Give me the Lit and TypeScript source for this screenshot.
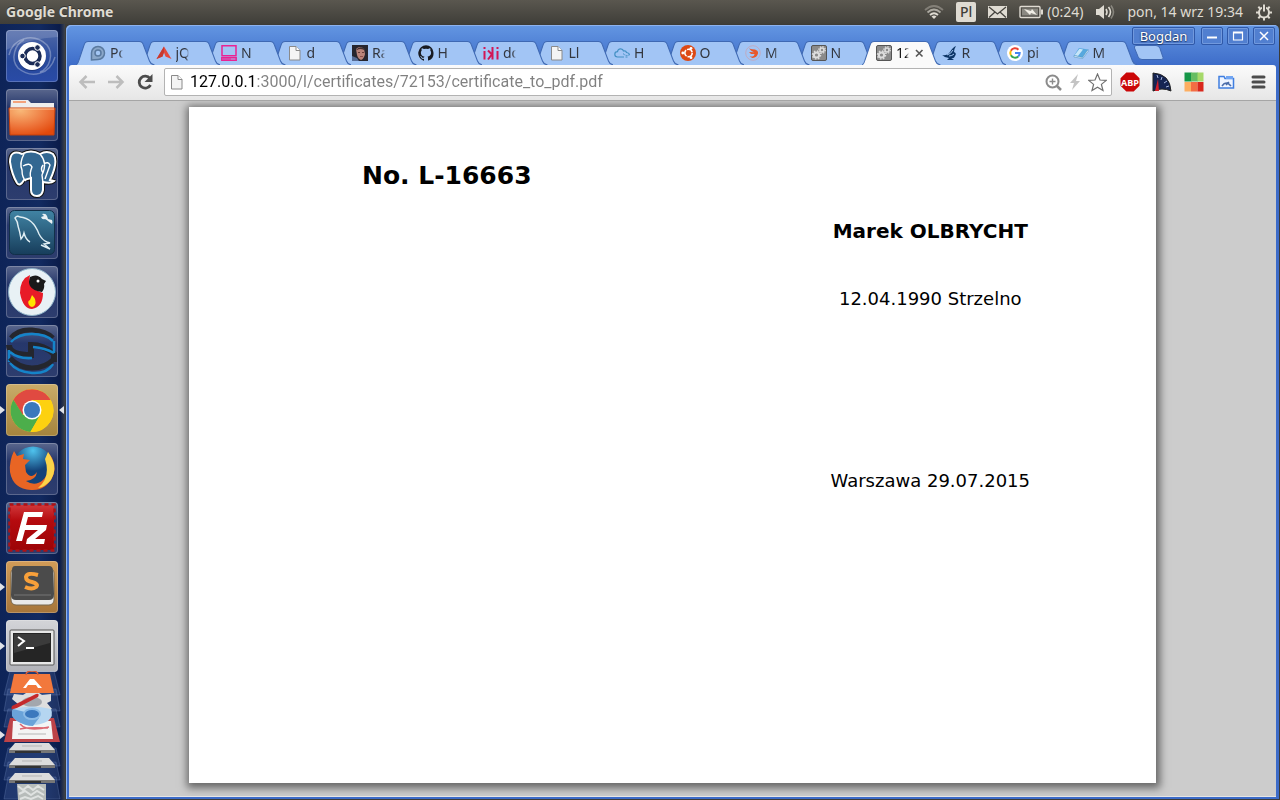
import { LitElement, html, css, svg, TemplateResult, SVGTemplateResult } from "lit";
import { customElement, property, state } from "lit/decorators.js";
import { classMap } from "lit/directives/class-map.js";

const icon = (w: number, h: number, body: SVGTemplateResult) =>
  html`<svg width=${w} height=${h} viewBox="0 0 ${w} ${h}" aria-hidden="true">${body}</svg>`;

const page = svg`<path d="M2.5 1.500h6.500l4 4v9.500h-10.500z" fill="#f4f4f4" stroke="#8a8a8a"/><path d="M9 1.500v4h4" fill="#fff" stroke="#8a8a8a"/>`;
const gears = svg`<rect x=".5" y=".5" width="15" height="15" rx="1.500" fill="#8b8b8b" stroke="#555"/>
  <circle cx="5.500" cy="10" r="2.600" fill="none" stroke="#ddd" stroke-width="2"/><circle cx="5.500" cy="10" r="4" fill="none" stroke="#ddd" stroke-width="1.500" stroke-dasharray="1.500 1.640"/>
  <circle cx="11" cy="5" r="2" fill="none" stroke="#ddd" stroke-width="1.600"/><circle cx="11" cy="5" r="3.300" fill="none" stroke="#ddd" stroke-width="1.200" stroke-dasharray="1.300 1.290"/>`;

interface Tab { title: string; icon: SVGTemplateResult; }

const tabs: Tab[] = [
  { title: "Po", icon: svg`<path d="M1.500 15V8a6.500 6.500 0 1 1 6.500 6.500z" fill="#8aa7c9" stroke="#59799f" stroke-width="1.500"/><circle cx="8" cy="8" r="3" fill="#a3c6f3" stroke="#59799f" stroke-width="1.500"/>` },
  { title: "jQ", icon: svg`<path d="M8 1.500L15.500 14 9.500 11.500 8 7.500 6.500 11.500.5 14z" fill="#e2483d"/><path d="M8 1.500L.5 14l6-2.500L8 7z" fill="#c7392f"/>` },
  { title: "N", icon: svg`<path d="M1 .8h14v10H1zM.8 12.700h14.400v2.500H.8z" fill="none" stroke="#ea2393" stroke-width="1.500"/><path d="M2 14h8" stroke="#ea2393"/>` },
  { title: "d", icon: page },
  { title: "Ra", icon: svg`<path d="M0 0h16v16H0z" fill="#26252e"/><path d="M4 4q4-4 8 0l1 5q-1 5-4 6-3-1-4-5z" fill="#b98379"/><path d="M4 5q4-5 9-1l-1 1q-4-2-7 0z" fill="#413030"/><path d="M0 11l5 2 2 3H0z" fill="#566c96"/><path d="M6 7.500h2m2 0h2" stroke="#6b3f3a"/><path d="M8 11.500h3" stroke="#8c4f4a"/>` },
  { title: "H", icon: svg`<path fill="#181b22" d="M8 .2a8 8 0 0 0-2.500 15.500c.4.100.5-.2.500-.4v-1.500c-2.200.500-2.700-1-2.700-1-.4-.9-.9-1.200-.9-1.200-.7-.5.100-.5.100-.5.800.100 1.200.8 1.200.8.700 1.300 1.900.9 2.300.7.100-.5.300-.9.500-1.100-1.800-.2-3.600-.9-3.600-4 0-.9.300-1.600.8-2.100-.1-.2-.4-1 .1-2.100 0 0 .7-.2 2.200.8a7.600 7.600 0 0 1 4 0c1.500-1 2.200-.8 2.200-.8.400 1.100.2 1.900.1 2.100.5.600.8 1.300.8 2.100 0 3.100-1.900 3.800-3.600 4 .3.200.5.700.5 1.500v2.200c0 .2.100.5.500.4A8 8 0 0 0 8 .2z"/>` },
  { title: "do", icon: svg`<path d="M1.500 6V14.500M9.500 2v12.500M9.500 10L5 5.500M9.500 8.500L5 14.500M14.500 6V14.500" fill="none" stroke="#d11755" stroke-width="2"/><path d="M.5 3h2m11 0h2" stroke="#d11755" stroke-width="2"/>` },
  { title: "Ll", icon: page },
  { title: "H", icon: svg`<path d="M10 12H3.500a2.700 2.700 0 0 1 0-5.400C4 3 8.800 3 9.500 6q2.500-.5 3 1.500 3 .5 2.800 2.500" fill="none" stroke="#4390c4" stroke-width="1.200"/><path d="M9 8.500q3 3 6.500 1.500m-4 2h3" fill="none" stroke="#4390c4" stroke-dasharray="2 1"/>` },
  { title: "O", icon: svg`<circle cx="8" cy="8" r="8" fill="#dd4814"/><circle cx="8.500" cy="8" r="3.700" fill="none" stroke="#fff" stroke-width="1.600" stroke-dasharray="6.700 1"/><g fill="#fff"><circle cx="2.800" cy="8" r="1.400"/><circle cx="11" cy="3.300" r="1.400"/><circle cx="11" cy="12.700" r="1.400"/></g>` },
  { title: "M", icon: svg`<circle cx="8" cy="8" r="7.300" fill="none" stroke="#c7a5b5" stroke-width=".8"/><path d="M4 3.500q3 1 6 1 3.500 1 3 4-1 4-5.500 4.500l-3-1.500q5 .5 5-2.500H6l-2-2 5 .2Q6 6 4 3.500z" fill="#e8582b"/>` },
  { title: "N", icon: gears },
  { title: "12", icon: gears },
  { title: "R", icon: svg`<path d="M0 10q5 1 8-3 3-5 6-6-2 3-2 6 3 1 1 4-1 3-4 2l3 2H5l2-2q-4 0-7-3z" fill="#0d3566"/><path d="M5 10q4-1 6-5m-4 6q3 0 5-2" stroke="#a3c6f3" fill="none"/>` },
  { title: "pi", icon: svg`<circle cx="8" cy="8" r="8" fill="#fff"/><g fill="none" stroke-width="2"><path d="M11.400 4.700A4.700 4.700 0 0 0 3.900 5.700" stroke="#ea4335"/><path d="M3.900 5.700a4.700 4.700 0 0 0 0 4.600" stroke="#fbbc05"/><path d="M3.900 10.300a4.700 4.700 0 0 0 7.300 1.100" stroke="#34a853"/><path d="M11.200 11.400A4.700 4.700 0 0 0 12.700 8H8" stroke="#4285f4"/></g>` },
  { title: "M", icon: svg`<path d="M6 3l9 1.500-5.500 8L1 10.500z" fill="#57a8de"/><path d="M6.500 3.800l3.500.7-5 6.500-3.500-.8z" fill="#c7e5f8"/><path d="M1 10.500l8.500 2 5.500-8v2l-5.300 7L1 12z" fill="#eff8fd" stroke="#3b84b9" stroke-width=".5"/>` },
];

interface App { name: string; tone: string; running?: boolean; focused?: boolean; art: SVGTemplateResult; }

const apps: App[] = [
  { name: "Dash", tone: "dash", art: svg`<g fill="none" stroke="#fff" stroke-opacity=".3" stroke-width="1.500"><path d="M3 25C7 8 27 2 41 15c7 9 3 23-7 27"/><path d="M49 27C44 45 25 49 12 38 4 29 9 14 18 10"/></g><path d="M0 20Q24 8 52 7V0H0z" fill="#fff" opacity=".15"/>
    <circle cx="26" cy="27" r="14" fill="#0b1c49" opacity=".4"/><circle cx="26" cy="26" r="14" fill="#fff"/><circle cx="26.500" cy="26" r="7.500" fill="none" stroke="#1b2c57" stroke-width="3.500"/><g fill="#1b2c57" stroke="#fff"><circle cx="16.500" cy="26" r="2.800"/><circle cx="31.500" cy="17.500" r="2.800"/><circle cx="31.500" cy="34.500" r="2.800"/></g>` },
  { name: "Files", tone: "plain", art: svg`<defs><radialGradient id="fo" cx=".25" cy=".1" r="1"><stop stop-color="#f8b777"/><stop offset=".6" stop-color="#ed7339"/><stop offset="1" stop-color="#e2480b"/></radialGradient></defs><path d="M5 11h17l3 3h23v10H4z" fill="#eee"/><path d="M7 12h13v2H7z" fill="#f3a27b"/><path d="M3 19h46l-1 27H4z" fill="url(#fo)" stroke="#c6400c"/><path d="M4 20h44" stroke="#ffc69d"/>` },
  { name: "pgAdmin", tone: "plain", art: svg`<path d="M16 6Q4 1 4 14q2 13 7 21 3 4 7-3l7-2v12q0 6 6 6 5 0 6-6V34q8 2 11-1l-4-1Q53 13 47 6q-6-4-13 0-9-5-18 0z" fill="#336791" stroke="#111" stroke-width="4" stroke-linejoin="round"/><path d="M16 6Q4 1 4 14q2 13 7 21 3 4 7-3l7-2v12q0 6 6 6 5 0 6-6V34q8 2 11-1l-4-1Q53 13 47 6q-6-4-13 0-9-5-18 0z" fill="#336791" stroke="#fff" stroke-width="2"/><path d="M18 6q-5 9-2 16 0 8 4 11m-3-15q7-4 9 1-3 7-1 11M34 6q8 9 2 21l1 8m0-18q-3 4 0 8m1-9q4-3 6 1l-5 14" fill="none" stroke="#fff" stroke-width="1.400"/>` },
  { name: "MySQL Workbench", tone: "plain", art: svg`<defs><linearGradient id="my" x2="0" y2="1"><stop stop-color="#4184a4"/><stop offset="1" stop-color="#173d5b"/></linearGradient></defs><rect x="3.500" y="3.500" width="45" height="44" rx="5" fill="url(#my)" stroke="#123049"/><path d="M24 35q-4-2-6-9-1 4-3 6-1-7-3-13 0-4-3-8 2-3 5-1 13 1 19 17 3 6 8 8l3 1-6 1 6 5-9-4" fill="none" stroke="#deedf3" stroke-width="1.400"/><path d="M36 7q4-1 5 2l1 3 4 1q1 2 0 4l-4-3q-1-1-3-2-3 1-4-2l3-1z" fill="#eaf1f4"/>` },
  { name: "Charm", tone: "plain", art: svg`<circle cx="26" cy="26" r="23.500" fill="#e8f1f5" stroke="#8fb3c8"/><path d="M24 9q-10 4-10 18 3 16 12 16 11-2 11-16-4-1-10-5-5-5-3-13z" fill="#e81b27"/><path d="M24 11q7-4 12 2l4 2-2 3q1 4-2 8-9-1-12-6-2-4 0-9z" fill="#1a1a1a"/><circle cx="32" cy="15" r="1.500" fill="#fff"/><path d="M26 29q5 5 3 10-3 4-6 0-2-4 1-5z" fill="#ffe400"/>` },
  { name: "SmartSVN", tone: "plain", art: svg`<path d="M5 13Q12 4 26 5t21 8" fill="none" stroke="#25272e" stroke-width="5"/><path d="M5 17Q12 9 26 9t21 7" fill="none" stroke="#1584c9" stroke-width="2.500"/><path d="M3 20q0 10 22 10V20q13 0 23 9v8" fill="none" stroke="#24262e" stroke-width="6"/><path d="M4 27q8 7 22 6M27 22q12 1 21 6M3 25v12m45-21v12M4 38q7 9 22 10t21-9" fill="none" stroke="#1584c9" stroke-width="2.500"/><path d="M4 33q9 10 22 10t22-9" fill="none" stroke="#24262e" stroke-width="5"/>` },
  { name: "Google Chrome", tone: "gold", running: true, focused: true, art: svg`<circle cx="26" cy="26.500" r="21.500" fill="#ffd21c"/><path d="M7.400 15.700A21.500 21.500 0 0 1 44.600 16H26L16.500 31z" fill="#e04a41"/><path d="M7.400 15.700a21.500 21.500 0 0 0 17 32.200L34 31H17z" fill="#4cae4b"/><path d="M26 16h18.600a21.500 21.500 0 0 1-20.200 32L34 32z" fill="#fdd110"/><circle cx="26" cy="26" r="9.500" fill="#fff"/><circle cx="26" cy="26" r="8" fill="#3b78bd"/>` },
  { name: "Firefox", tone: "plain", art: svg`<defs><radialGradient id="ff" cx=".5" cy=".1"><stop stop-color="#4fc3ee"/><stop offset="1" stop-color="#144278"/></radialGradient></defs><circle cx="27" cy="24" r="20.500" fill="url(#ff)"/><path d="M42 9q10 12 5 24-7 15-22 14Q7 46 4 29q-1-11 4-21l3 5 7-2-1 5 7 1-5 5 1 7q5 8 11 0-1 8-11 9 9 6 17-1 9-9 5-28z" fill="#e96524"/><path d="M42 9q11 15 3 28-6 7-13 8 13-11 7-29z" fill="#fad449"/>` },
  { name: "FileZilla", tone: "plain", art: svg`<defs><linearGradient id="fz" x2="0" y2="1"><stop stop-color="#d0373a"/><stop offset=".35" stop-color="#b50a0e"/><stop offset="1" stop-color="#9c0407"/></linearGradient></defs><rect x="4" y="3" width="44" height="45" fill="url(#fz)"/><rect x="3.500" y="2.500" width="45" height="46" fill="none" stroke="#ad1216" stroke-width="2.500" stroke-dasharray="4 3"/><path d="M18 10h19l-1 5H22l-2 8h11l-1 5H19l-3 11h-6z" fill="#fff"/><path d="M23 23h18l-1 5-11 9h10l-1 5H20l1-5 11-9H22z" fill="#fff"/>` },
  { name: "Sublime Text", tone: "amber", running: true, art: svg`<rect x="5" y="7" width="43" height="37" rx="5" fill="#e9e9e9" stroke="#776850"/><path d="M9 5h34q4 0 4 5l1 23q0 6-5 6H10q-5 0-5-5L6 9q0-4 3-4z" fill="#4b4b4b"/><path d="M8 34h37" stroke="#777"/><path d="M32 14q-11-3-12 2 0 4 6 5 7 2 4 5-4 3-11 0" fill="none" stroke="#f8a03a" stroke-width="4"/>` },
  { name: "Terminal", tone: "silver", running: true, art: svg`<rect x="4" y="10" width="44" height="35" rx="1" fill="#e8e8e8" stroke="#555"/><rect x="7" y="13" width="38" height="29" fill="#252525"/><path d="M8 14h36v9L8 33z" fill="#fff" opacity=".1"/><path d="M12 17l6 4-6 5M20 28h8" fill="none" stroke="#fff" stroke-width="2"/>` },
];

const foldedStack = svg`
  <g fill="#6786c4" fill-opacity=".2" stroke="#8ba4d5" stroke-opacity=".25"><path d="M10 0h44l6 24H4z"/><path d="M8 18h48l4 22H4z"/><path d="M8 38h48l4 18H4z"/><path d="M8 77h48l4 18H4z"/><path d="M8 91h48l4 18H4z"/><path d="M8 106h48l4 22H4z"/></g>
  <path d="M14 3h36l4 19H10z" fill="#f2783c"/><path d="M26 4q0-4 6-4t6 4" fill="none" stroke="#db5d33" stroke-width="1.500"/><path d="M23 17l7-9h4l8 9h-4l-2-3h-8l-2 3z" fill="#fff"/>
  <path d="M14 23l9 1 3-2h13l3 2 9-1v7l-4 2 5 6-13 3H17l-4-4 5-4-6-5z" fill="#dedede"/><ellipse cx="32" cy="31" rx="10" ry="5" fill="#a3a7ad"/><path d="M12 35l24-12q4-1 2 3L15 38q-5 1-3-3z" fill="#c52a2c"/>
  <path d="M10 47h44l6 24H4z" fill="#bd4348"/><path d="M13 50h38l2 18H12z" fill="#f4f4f4"/><path d="M20 53q7 8 29 3M20 58q8-2 28-1" fill="none" stroke="#dc6771" stroke-width="1.500"/><path d="M18 63h28" stroke="#d5d5d5" stroke-width="2"/>
  <path d="M13 38q19-5 38 0 3 7-3 12-15 8-31 0-7-6-4-12z" fill="#b5d6f1"/><path d="M13 38q-4 7 4 12 8 5 16 5l6-8-10-5z" fill="#6aa3d9"/><ellipse cx="32" cy="43" rx="8" ry="5" fill="#3b78bd" stroke="#8cbbe6" stroke-width="2"/>
  ${[0, 15, 30].map((y) => svg`<g transform="translate(0 ${y})"><path d="M15 72h34l6 7H9z" fill="#dcdcdc"/><path d="M9 79h46v3H9z" fill="#777"/><path d="M15 80h26v2H15z" fill="#333"/><path d="M22 75h20" stroke="#b5b5b5"/></g>`)}
  <path d="M17 113h29v16H18z" fill="#b7bcba"/><path d="M18 115l5 4 5-4 5 4 5-4 6 4M19 123l6-3 6 4 6-4 7 4M20 128l5-2 6 2 7-3 5 3" fill="none" stroke="#dfe2e1" stroke-width="2"/>`;

@customElement("launcher-bar")
class LauncherBar extends LitElement {
  static styles = css`
    :host { display: block; overflow: hidden; background: linear-gradient(90deg, #0e2458 0%, #122a61 60%, #0b1c4a 92%, #3c424b 100%); }
    .list { list-style: none; margin: 0; padding: 6px 0 0; display: flex; flex-direction: column; gap: 7px; }
    .item { display: grid; grid-template-columns: 6px 52px 6px; align-items: center; flex: none; }
    .tile { appearance: none; display: block; width: 52px; height: 52px; padding: 0; border: 0; border-radius: 4px; overflow: hidden; grid-column: 2; grid-row: 1; box-shadow: inset 0 0 0 1px rgba(255, 255, 255, 0.22); }
    .tile svg { display: block; }
    .dash { background: linear-gradient(#5069a8, #27499b 60%, #2a4ba7); }
    .plain { background: linear-gradient(#5a678d, #26376b 35%, #2d3d6e); }
    .gold { background: linear-gradient(#c9ab69, #a5843d); }
    .amber { background: linear-gradient(#d29c58, #a6753a); }
    .silver { background: linear-gradient(#d3d4d8, #b1b2b8); }
    .mark { width: 0; height: 0; border: 4px solid transparent; grid-row: 1; }
    .running { border-left: 5px solid #dfe2e8; border-right: 0; grid-column: 1; }
    .focused { border-right: 5px solid #dfe2e8; border-left: 0; grid-column: 3; justify-self: end; }
    .stack { display: block; width: 65px; height: 129px; }
    .item.folded { display: block; margin-top: -8px; }
  `;
  render() {
    return html`<ul class="list">
      ${apps.map((a) => html`<li class="item">
        ${a.running ? html`<span class="mark running"></span>` : ""}
        <button class="tile ${a.tone}" aria-label=${a.name}>${icon(52, 52, a.art)}</button>
        ${a.focused ? html`<span class="mark focused"></span>` : ""}
      </li>`)}
      <li class="item folded"><svg class="stack" viewBox="0 0 65 129" aria-hidden="true"><path d="M0 60l5 4-5 4z" fill="#dfe2e8"/>${foldedStack}</svg></li>
    </ul>`;
  }
}

@customElement("system-panel")
class SystemPanel extends LitElement {
  static styles = css`
    :host { display: flex; justify-content: space-between; align-items: center; padding: 0 7px 0 6px; background: linear-gradient(#5a574f, #3f3e39); color: #dfdbd2; font: 14px/24px "Noto Sans", sans-serif; }
    .title { font-weight: 700; text-shadow: 0 -1px #33322e; }
    .status { display: flex; align-items: center; gap: 12px; }
    .status svg { display: block; }
    .lang { width: 20px; height: 20px; border-radius: 2px; background: #dfdbd2; color: #3f3e39; line-height: 20px; font-weight: 500; text-align: center; }
    .power { display: flex; align-items: center; gap: 4px; }
  `;
  render() {
    return html`<span class="title">Google Chrome</span>
      <div class="status">
        ${icon(20, 16, svg`<g fill="none" stroke="#dfdbd2" stroke-width="1.800"><path d="M1 6q9-8 18 0" opacity=".35"/><path d="M3.500 8.500q6.500-6 13 0" opacity=".65"/><path d="M6 11q4-3.600 8 0"/></g><path d="M7.500 12.500q2.500-2 5 0L10 15z" fill="#dfdbd2"/>`)}
        <span class="lang">Pl</span>
        ${icon(19, 14, svg`<path d="M0 1h19v12H0z" fill="#dfdbd2"/><path d="M1 2l8.500 7L18 2M1 12.500l6-5.500m11 5.500L12 7" fill="none" stroke="#45433e" stroke-width="1.300"/>`)}
        <span class="power">${icon(24, 14, svg`<rect x="1" y="1.500" width="20" height="11" rx="1" fill="none" stroke="#dfdbd2" stroke-width="1.400"/><path d="M22 4.500h2v5h-2z" fill="#dfdbd2"/><path d="M3 3.500h16v7H3z" fill="#8b8982"/><path d="M5 4l7 2 1-2 5 6-6-2-1 2z" fill="#f0ede5"/>`)}<span>(0:24)</span></span>
        ${icon(20, 16, svg`<path d="M1 5h3l5-4v14l-5-4H1z" fill="#dfdbd2"/><path d="M11 5q2 3 0 6M13.500 3q4 5 0 10" fill="none" stroke="#dfdbd2" stroke-width="1.600"/><path d="M16 1.500q5 6.500 0 13" fill="none" stroke="#dfdbd2" stroke-opacity=".4" stroke-width="1.600"/>`)}
        <span>pon, 14 wrz 19:34</span>
        ${icon(18, 18, svg`<circle cx="9" cy="9.500" r="5" fill="none" stroke="#dfdbd2" stroke-width="2"/><path d="M7 2h4v7H7z" fill="#4d4a44"/><path d="M9 1.500v7M1 9.500h3m10 0h3M3.300 15.200l2-2m7.400 0l2 2M9 14.500v3M3.300 3.800l2 2m7.400 0l2-2" stroke="#dfdbd2" stroke-width="2"/>`)}
      </div>`;
  }
}

@customElement("tab-strip")
class TabStrip extends LitElement {
  @property({ type: Number }) active = 12;
  static styles = css`
    :host { display: flex; align-items: flex-start; padding: 0 112px 0 7px; margin-top: -4px; height: 24px; }
    .tabs { display: flex; flex: 1; min-width: 0; height: 24px; }
    .tab { position: relative; flex: 1 1 0; min-width: 0; display: flex; align-items: center; }
    .shape { position: absolute; left: 0; top: 0; width: calc(100% + 13px); height: 24px; }
    .shape path { fill: #a2c5f5; stroke: #3f69b3; }
    .active .shape path { fill: #fafafa; stroke: #416bb4; }
    .pick { position: relative; appearance: none; border: 0; background: none; margin: 0; padding: 0 0 0 14px; display: flex; align-items: center; gap: 4px; height: 24px; color: #33373f; font: 14px/24px "Noto Sans", sans-serif; }
    .active .pick { color: #111; }
    .pick svg { display: block; flex: none; }
    .name { width: 13px; overflow: hidden; white-space: nowrap; text-align: left; mask-image: linear-gradient(90deg, #000 75%, transparent); }
    .close { position: relative; appearance: none; border: 0; background: none; padding: 0; margin-left: 5px; height: 10px; width: 10px; }
    .close svg { display: block; }
    .fresh { appearance: none; border: 0; background: none; padding: 0; margin: 4px 0 0 9px; height: 16px; width: 31px; flex: none; }
    .fresh svg { display: block; }
  `;
  render() {
    return html`<div class="tabs" role="tablist">
      ${tabs.map((t, i) => html`<div class=${classMap({ tab: true, active: i === this.active })} style="z-index:${i === this.active ? 30 : 20 - i}">
        <svg class="shape" viewBox="0 0 78 24" preserveAspectRatio="none" aria-hidden="true"><path d="M0 24Q2 23 3 19L8 4Q9 .5 12 .5H63Q66 .5 67 4L73 20Q74 23 78 24"/></svg>
        <button class="pick" role="tab" aria-selected=${i === this.active}>${icon(16, 16, t.icon)}<span class="name">${t.title}</span></button>
        ${i === this.active ? html`<button class="close" aria-label="Close tab">${icon(10, 10, svg`<path d="M2 2l6.500 6.500m0-6.500l-6.500 6.500" stroke="#555" stroke-width="1.600"/>`)}</button>` : ""}
      </div>`)}
      </div>
      <button class="fresh" aria-label="New tab">${icon(31, 16, svg`<path d="M3 .5h20q3 0 4 3l3 9q1 2-2 2H9q-3 0-4-3L1.500 3Q1 .5 3 .5z" fill="#a2c5f5" stroke="#3f69b3"/>`)}</button>`;
  }
}

@customElement("browser-toolbar")
class BrowserToolbar extends LitElement {
  @state() private url = "127.0.0.1:3000/l/certificates/72153/certificate_to_pdf.pdf";
  static styles = css`
    :host { display: flex; align-items: center; height: 36px; box-sizing: border-box; padding: 0 8px 1px 9px; gap: 10px; background: linear-gradient(#fbfbfb, #e6e6e6); border-bottom: 1px solid #a5a5a5; border-radius: 3px 3px 0 0; }
    .nav { display: flex; gap: 11px; }
    .act { appearance: none; border: 0; background: none; padding: 0; display: block; flex: none; }
    .act svg { display: block; }
    .omni { flex: 1; min-width: 0; display: flex; align-items: center; height: 28px; box-sizing: border-box; border: 1px solid #b3b3b3; border-radius: 2px; background: #fff; padding: 0 4px; gap: 5px; }
    .url { flex: 1; min-width: 0; border: 0; padding: 0; margin: 0; height: 26px; font: 16px/26px Roboto, sans-serif; color: #808080; -webkit-text-fill-color: transparent; background: linear-gradient(90deg, #000 66px, #808080 66px); background-clip: text; -webkit-background-clip: text; outline: none; }
    .extras { display: flex; gap: 12px; margin-left: -2px; }
  `;
  render() {
    const act = (label: string, w: number, h: number, body: SVGTemplateResult): TemplateResult =>
      html`<button class="act" aria-label=${label}>${icon(w, h, body)}</button>`;
    return html`<div class="nav">
        ${act("Back", 18, 18, svg`<path d="M17 9H2.500M8.500 3L2.500 9l6 6" fill="none" stroke="#bdbdbd" stroke-width="2.500"/>`)}
        ${act("Forward", 18, 18, svg`<path d="M1 9h14.500M9.500 3l6 6-6 6" fill="none" stroke="#bdbdbd" stroke-width="2.500"/>`)}
        ${act("Reload", 18, 18, svg`<path d="M14.500 12A6 6 0 1 1 14 5.500" fill="none" stroke="#4c4c4c" stroke-width="2.800"/><path d="M16.500 1v8h-8z" fill="#4c4c4c"/>`)}
      </div>
      <div class="omni">
        ${icon(16, 16, page)}
        <input class="url" type="text" aria-label="Address" spellcheck="false" .value=${this.url} />
        ${act("Zoom", 17, 17, svg`<circle cx="7.500" cy="7.500" r="6" fill="none" stroke="#8b8b8b" stroke-width="2"/><path d="M12 12l4 4" stroke="#8b8b8b" stroke-width="2.500"/><path d="M7.500 4.500v6m-3-3h6" stroke="#8b8b8b" stroke-width="1.400"/>`)}
        ${act("Plugins", 16, 16, svg`<path d="M11 0L3 9h4l-2 7 8-9H9z" fill="#c4c4c4"/>`)}
        ${act("Bookmark", 19, 19, svg`<path d="M9.500 1l2.500 6 6.300.4-4.900 4 1.600 6.100-5.500-3.300L4 17.500l1.600-6.100-4.900-4L7 7z" fill="#fff" stroke="#707070" stroke-width="1.200"/>`)}
      </div>
      <div class="extras">
        ${act("Adblock Plus", 20, 20, svg`<path d="M6.300.5h7.400l5.800 5.800v7.400l-5.800 5.800H6.300L.5 13.700V6.300z" fill="#cb0708"/><text x="10" y="13.500" text-anchor="middle" font-family="Open Sans" font-weight="700" font-size="9" fill="#fff">ABP</text>`)}
        ${act("Page speed", 20, 20, svg`<path d="M1 1q17 1 18 18-9-4-18 0z" fill="#152453" stroke="#242424"/><path d="M5 3l1 3m4-1l-1 3m6 1l-3 2m5 3l-3 1" stroke="#a9b9df"/><path d="M3 19L6 7l1 12z" fill="#d31e2a"/>`)}
        ${act("Colour grid", 20, 20, svg`<path d="M.5.500h7v9h-7z" fill="#159647"/><path d="M7 .5h7v9H7z" fill="#66bd63"/><path d="M13.500.500h6v9h-6z" fill="#a6d96a"/><path d="M.5 10h6.500v9.500H.5z" fill="#fdae61"/><path d="M7 10h6.500v9.500H7z" fill="#f46d43"/><path d="M13.500 10h6v9.500h-6z" fill="#d9281d"/>`)}
        ${act("Page monitor", 20, 20, svg`<path d="M3 4.500h5l1 2h8.500v9.500H3z" fill="#eef4ff" stroke="#3f7ee0" stroke-width="1.500"/><path d="M10 4h7v3h-7z" fill="#70a5f3"/><path d="M6 14q4-6 9 0m-5-1l3-3" fill="none" stroke="#4a6ca9" stroke-width="1.500"/>`)}
        ${act("Menu", 20, 20, svg`<path d="M5 5h11M5 10h11M5 15h11" stroke="#4c4c4c" stroke-width="3" stroke-linecap="round"/>`)}
      </div>`;
  }
}

@customElement("certificate-view")
class CertificateView extends LitElement {
  static styles = css`
    :host { display: block; min-height: 0; overflow: hidden; background: #ccc; padding: 6px 120px 0; border-bottom: 1px solid #e5e5e5; }
    .sheet { box-sizing: border-box; aspect-ratio: 967 / 676; background: #fff; box-shadow: 1px 2px 8px 3px rgba(0, 0, 0, 0.5); display: grid; grid-template-columns: 1fr 1fr; align-items: start; color: #000; font: 18px/24px "DejaVu Sans", sans-serif; text-align: center; }
    .cell { padding: 53px 0 0 32px; }
    .number { margin: 0; font-size: 25px; line-height: 32px; font-weight: 700; }
    .person { margin: 59px 0 0; font-size: 20px; line-height: 24px; font-weight: 700; }
    .line { margin: 44px 0 0; }
    .issued { margin-top: 158px; }
  `;
  render() {
    return html`<article class="sheet">
      <div class="cell"><h1 class="number">No. L-16663</h1></div>
      <div class="cell"><h2 class="person">Marek OLBRYCHT</h2>
        <p class="line">12.04.1990 Strzelno</p>
        <p class="line issued">Warszawa 29.07.2015</p></div>
    </article>`;
  }
}

@customElement("app-root")
class AppRoot extends LitElement {
  static styles = css`
    :host { display: grid; grid-template: "panel panel" 24px "launcher window" minmax(0, 1fr) / 65px minmax(0, 1fr); height: 100vh; background: #3c3b37; }
    system-panel { grid-area: panel; }
    launcher-bar { grid-area: launcher; }
    .window { grid-area: window; margin: 1px; display: flex; flex-direction: column; min-height: 0; padding: 0 3px 2px; border-radius: 5px 5px 0 0; background: linear-gradient(#6396e2, #3c6bc8 42px); box-shadow: inset 1px 1px #8db3ef; }
    .controls { display: flex; justify-content: flex-end; align-items: flex-start; height: 20px; padding: 2px 1px 0; box-sizing: border-box; gap: 4px; }
    .ctl { appearance: none; box-sizing: border-box; height: 18px; width: 22px; padding: 0; border: 1px solid #2f58a8; border-radius: 2px; background: #517fd0; box-shadow: inset 0 0 0 1px #7199dd; display: grid; place-items: center; flex: none; }
    .user { width: 63px; margin-right: 2px; color: #fff; font: 13px/16px "Noto Sans", sans-serif; text-shadow: 0 1px 1px #1e3768, 0 0 2px #1e3768; }
    certificate-view { flex: 1; }
  `;
  render() {
    return html`<system-panel></system-panel>
      <launcher-bar></launcher-bar>
      <main class="window">
        <div class="controls">
          <button class="ctl user">Bogdan</button>
          <button class="ctl" aria-label="Minimize">${icon(12, 12, svg`<path d="M1 7.500h10" stroke="#fff" stroke-width="2"/>`)}</button>
          <button class="ctl" aria-label="Maximize">${icon(12, 12, svg`<path d="M1.500 2h9v8h-9zM1 3h10" fill="none" stroke="#fff" stroke-width="1.200"/>`)}</button>
          <button class="ctl" aria-label="Close">${icon(12, 12, svg`<path d="M2 2l8 8m0-8l-8 8" stroke="#fff" stroke-width="1.500"/>`)}</button>
        </div>
        <tab-strip></tab-strip>
        <browser-toolbar></browser-toolbar>
        <certificate-view></certificate-view>
      </main>`;
  }
}
